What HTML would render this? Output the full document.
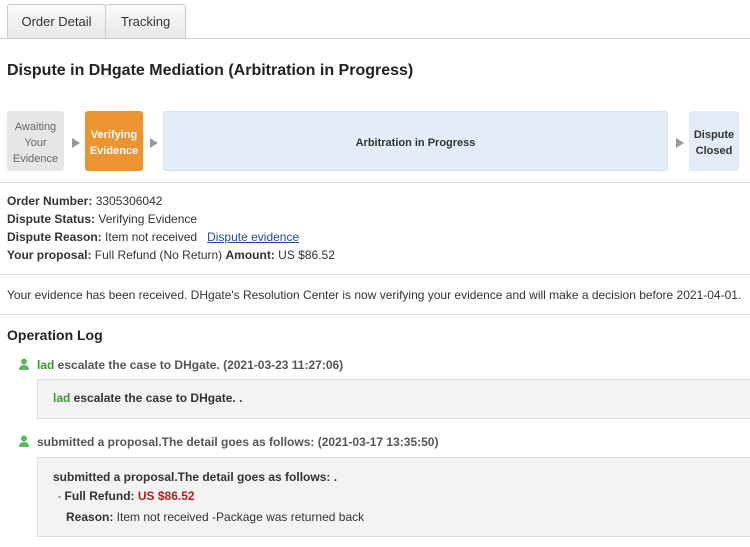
<!DOCTYPE html>
<html><head><style>
body{margin:0;width:750px;height:547px;background:#fff;font-family:"Liberation Sans",Arial,sans-serif;color:#333;position:relative;overflow:hidden;font-size:12px}
.a{position:absolute;white-space:nowrap}
.tab{position:absolute;top:4px;height:34px;border:1px solid #ccc;border-bottom:none;border-radius:3px 3px 0 0;background:linear-gradient(#fafafa,#e8e8e8);font-size:13px;color:#333;text-align:center;line-height:33px}
.hr{position:absolute;left:0;width:750px;height:1px;background:#ddd}
.step{position:absolute;top:111px;height:60px;border-radius:3px;display:flex;align-items:center;justify-content:center;text-align:center;font-size:11px;line-height:16px;padding-top:3px;box-sizing:border-box}
.arr{position:absolute;top:138px;width:0;height:0;border-left:8px solid #999;border-top:5px solid transparent;border-bottom:5px solid transparent}
b{font-weight:bold}
.g{color:#3c9b2f;font-weight:bold}
.box{position:absolute;left:37px;width:713px;background:#f3f3f3;border:1px solid #ddd;border-right:none}
.ic{position:absolute;width:12px;height:12px}
</style></head><body>
<div class="tab" style="left:7px;width:97px">Order Detail</div>
<div class="tab" style="left:105px;width:79px">Tracking</div>
<div class="hr" style="top:38px;background:#ccc"></div>
<div class="a" style="left:7px;top:62px;font-size:16px;font-weight:bold;color:#222">Dispute in DHgate Mediation (Arbitration in Progress)</div>

<div class="step" style="left:7px;width:57px;background:#e6e6e6;color:#666">Awaiting<br>Your<br>Evidence</div>
<div class="arr" style="left:72px"></div>
<div class="step" style="left:85px;width:58px;background:#ec9430;color:#fff;font-weight:bold">Verifying<br>Evidence</div>
<div class="arr" style="left:150px"></div>
<div class="step" style="left:163px;width:505px;background:#e3edf8;border:1px solid #d4e1ef;color:#333;font-weight:bold">Arbitration in Progress</div>
<div class="arr" style="left:676px"></div>
<div class="step" style="left:689px;width:50px;background:#e3edf8;color:#333;font-weight:bold">Dispute<br>Closed</div>

<div class="hr" style="top:182px"></div>
<div class="a" style="left:7px;top:194px"><b>Order Number:</b> 3305306042</div>
<div class="a" style="left:7px;top:212px"><b>Dispute Status:</b> Verifying Evidence</div>
<div class="a" style="left:7px;top:230px"><b>Dispute Reason:</b> Item not received &nbsp; <span style="color:#1a4c9c;text-decoration:underline">Dispute evidence</span></div>
<div class="a" style="left:7px;top:248px"><b>Your proposal:</b> Full Refund (No Return) <b>Amount:</b> US $86.52</div>
<div class="hr" style="top:274px"></div>
<div class="a" style="left:7px;top:288px">Your evidence has been received. DHgate's Resolution Center is now verifying your evidence and will make a decision before 2021-04-01.</div>
<div class="hr" style="top:314px"></div>
<div class="a" style="left:7px;top:327px;font-size:14px;font-weight:bold;color:#222">Operation Log</div>

<svg class="ic" style="left:18px;top:358px" viewBox="0 0 12 12"><circle cx="6" cy="3.5" r="3" fill="#5cb85c"/><path d="M1 12 Q1 7 6 7 Q11 7 11 12Z" fill="#5cb85c"/></svg>
<div class="a" style="left:37px;top:358px;color:#555;font-weight:bold"><span class="g">lad</span> escalate the case to DHgate. (2021-03-23 11:27:06)</div>
<div class="box" style="top:379px;height:38px"></div>
<div class="a" style="left:53px;top:391px;font-weight:bold;color:#333"><span class="g">lad</span> escalate the case to DHgate. .</div>

<svg class="ic" style="left:18px;top:435px" viewBox="0 0 12 12"><circle cx="6" cy="3.5" r="3" fill="#5cb85c"/><path d="M1 12 Q1 7 6 7 Q11 7 11 12Z" fill="#5cb85c"/></svg>
<div class="a" style="left:37px;top:435px;color:#555;font-weight:bold">submitted a proposal.The detail goes as follows: (2021-03-17 13:35:50)</div>
<div class="box" style="top:457px;height:78px"></div>
<div class="a" style="left:53px;top:470px;font-weight:bold">submitted a proposal.The detail goes as follows: .</div>
<div class="a" style="left:58px;top:489px;font-weight:bold"><span style="color:#999;font-size:9px">▪</span> Full Refund: <span style="color:#b01e1e">US $86.52</span></div>
<div class="a" style="left:66px;top:510px"><b>Reason:</b> Item not received -Package was returned back</div>
</body></html>
